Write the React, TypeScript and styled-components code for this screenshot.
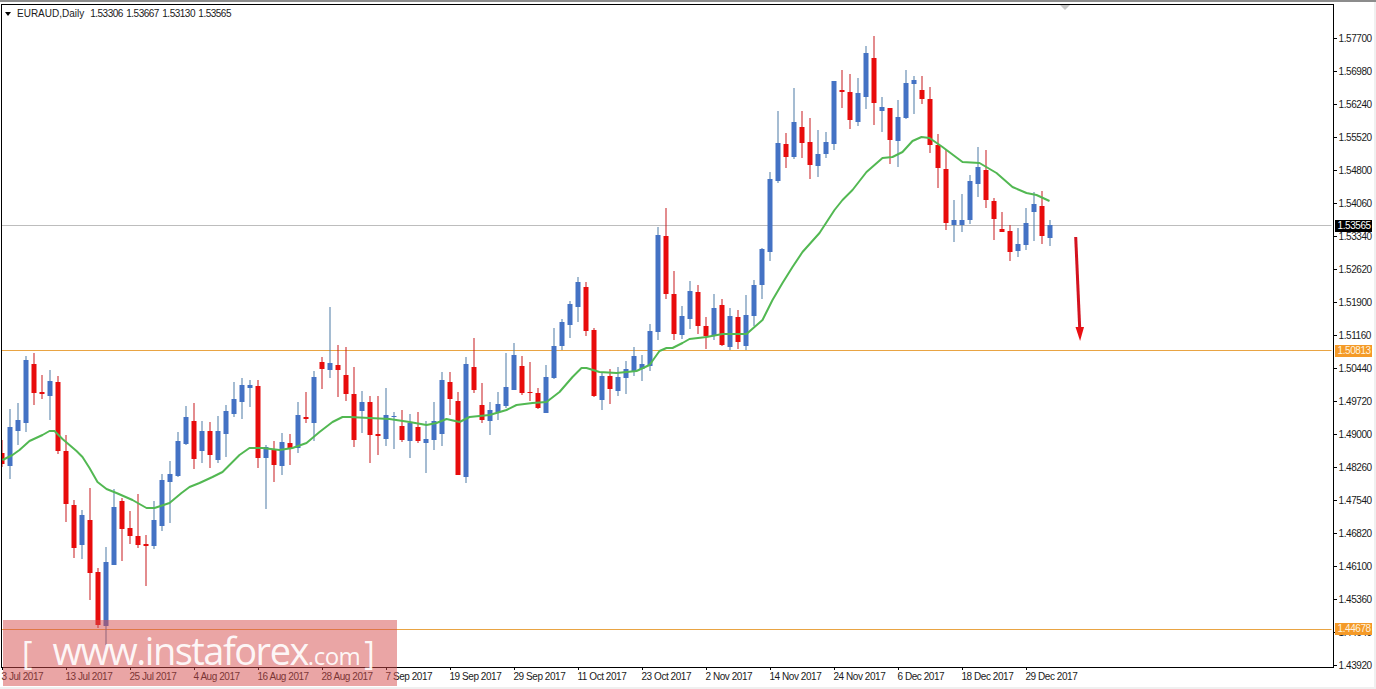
import React from "react";
import styled, { createGlobalStyle } from "styled-components";

const Global = createGlobalStyle`
  html, body { margin: 0; padding: 0; background: #f0f0f0; }
  #root { width: 1376px; height: 689px; overflow: hidden; }
`;

const FONT = `"Liberation Sans", Arial, sans-serif`;
const GREY = "#bdbdbd";
const ORANGE = "#e9a443";

const Page = styled.div`
  position: relative;
  width: 1376px;
  height: 689px;
  overflow: hidden;
  background: #f0f0f0;
  font-family: ${FONT};
  font-size: 10px;
  color: #1a1a1a;
`;
const TopEdge = styled.div`
  height: 2px;
  background: #8c8c8c;
`;
const Terminal = styled.div`
  width: 1374px;
  height: 685px;
  padding: 1.5px 0 0 1px;
  box-sizing: border-box;
  background: #fff;
  display: grid;
  grid-template-columns: 1333px 1fr;
  grid-template-rows: 664px 1fr;
`;
const Plot = styled.div`
  position: relative;
  box-sizing: border-box;
  border: 1.5px solid #000;
  overflow: hidden;
`;
const ChartSvg = styled.svg`
  display: block;
  width: 1330px;
  height: 661px;
  filter: blur(0.3px);
`;
const Legend = styled.div`
  position: absolute;
  left: 3px;
  top: 3.5px;
  display: flex;
  align-items: center;
  gap: 3.4px;
  line-height: 12px;
  white-space: nowrap;
`;
const LegendMark = styled.span`
  width: 0;
  height: 0;
  margin-right: 2.6px;
  border-left: 3px solid transparent;
  border-right: 3px solid transparent;
  border-top: 4px solid #000;
`;
const LegendName = styled.span`
  margin-right: 2.6px;
`;
const LegendValue = styled.span`
  letter-spacing: -0.5px;
`;
const ShiftMark = styled.div`
  position: absolute;
  left: 1058px;
  top: 0;
  width: 0;
  height: 0;
  border-left: 5px solid transparent;
  border-right: 5px solid transparent;
  border-top: 5px solid #c8c8c8;
`;
const PriceAxis = styled.div`
  display: flex;
  flex-direction: column;
  padding-top: 18px;
`;
const PriceTick = styled.div`
  position: relative;
  height: 33px;
  flex: none;
  padding-left: 4.5px;
  line-height: 33px;
  letter-spacing: -0.42px;
  white-space: nowrap;
  &::before {
    content: "";
    position: absolute;
    left: -1px;
    top: 16px;
    width: 4px;
    height: 1px;
    background: #000;
  }
`;
const TimeAxis = styled.div`
  grid-column: 1 / 3;
  display: flex;
  padding-left: 1px;
`;
const TimeTick = styled.div`
  position: relative;
  flex: none;
  width: 64px;
  padding-top: 3.5px;
  line-height: 12px;
  letter-spacing: -0.45px;
  text-indent: -0.5px;
  white-space: nowrap;
  &::before {
    content: "";
    position: absolute;
    left: 0;
    top: -1px;
    width: 1px;
    height: 3px;
    background: #000;
  }
`;
const PriceTag = styled.div<{ $top: number; $bg: string; $fg: string }>`
  position: absolute;
  left: 1334.5px;
  top: ${(p) => p.$top}px;
  width: 37px;
  height: 12px;
  padding-left: 3px;
  box-sizing: border-box;
  background: ${(p) => p.$bg};
  color: ${(p) => p.$fg};
  line-height: 12px;
  letter-spacing: -0.42px;
`;
const Watermark = styled.div`
  position: absolute;
  left: 3px;
  top: 620px;
  width: 394px;
  height: 66px;
  box-sizing: border-box;
  padding-left: 19px;
  background: rgba(214, 75, 75, 0.5);
  color: rgba(255, 255, 255, 0.92);
  font-family: "Open Sans", sans-serif;
  display: flex;
  align-items: baseline;
  line-height: 60px;
  white-space: nowrap;
`;
const Bracket = styled.span<{ $gap: number }>`
  font-size: 32px;
  font-weight: 400;
  margin-right: ${(p) => p.$gap}px;
  margin-left: ${(p) => (p.$gap ? 0 : 4)}px;
`;
const Site = styled.span`
  font-size: 38px;
  letter-spacing: -1.5px;
`;
const Tld = styled.span`
  font-size: 24px;
  letter-spacing: -0.5px;
`;

type Candle = [number, number, number, number, "b" | "r"];
const CANDLES: Candle[] = [
  [440,467,453,464,"r"],[409,479,427,466,"b"],[403,445,420,431,"b"],[356,432,360,423,"b"],
  [353,405,364,393,"r"],[375,399,392,394,"r"],[370,420,381,396,"b"],[376,454,382,451,"r"],
  [435,522,451,504,"r"],[500,558,505,548,"r"],[510,559,515,545,"b"],[488,600,520,573,"r"],
  [568,628,572,625,"r"],[547,645,562,626,"b"],[489,565,507,565,"b"],[498,561,501,529,"r"],
  [511,544,528,536,"r"],[494,548,536,545,"r"],[535,586,544,546,"r"],[501,549,520,546,"b"],
  [474,531,480,526,"b"],[461,523,474,482,"b"],[432,477,441,476,"b"],[406,445,417,444,"b"],
  [403,469,421,459,"r"],[421,463,431,451,"b"],[422,468,431,455,"r"],[416,463,431,460,"b"],
  [405,457,411,434,"b"],[382,417,399,414,"b"],[378,419,385,402,"b"],[380,407,385,388,"b"],
  [380,468,386,458,"r"],[445,509,447,458,"b"],[441,482,449,465,"r"],[433,475,442,466,"b"],
  [434,465,443,448,"r"],[402,453,415,448,"b"],[392,423,417,419,"r"],[371,441,377,423,"b"],
  [357,389,362,369,"r"],[307,378,363,370,"b"],[345,397,365,370,"r"],[347,401,375,394,"r"],
  [367,447,394,440,"r"],[391,433,402,411,"b"],[396,463,402,435,"r"],[396,455,434,436,"r"],
  [388,446,415,439,"b"],[412,449,416,417,"b"],[410,442,426,440,"r"],[414,458,423,441,"b"],
  [412,443,427,441,"r"],[421,473,439,443,"b"],[402,450,421,440,"b"],[372,446,380,434,"b"],
  [372,415,382,399,"r"],[392,475,401,475,"r"],[357,483,364,477,"b"],[338,393,367,390,"r"],
  [383,423,405,420,"r"],[402,435,410,421,"b"],[392,420,404,412,"b"],[353,408,387,406,"b"],
  [343,390,355,390,"b"],[356,395,366,393,"r"],[362,401,392,393,"r"],[388,409,393,408,"r"],
  [365,413,377,413,"b"],[328,379,346,378,"b"],[319,350,322,346,"b"],[301,338,304,325,"b"],
  [277,322,282,307,"b"],[282,336,287,331,"r"],[328,397,330,396,"r"],[372,410,376,400,"b"],
  [369,404,376,389,"r"],[367,396,377,391,"b"],[361,394,369,378,"b"],[347,376,356,371,"b"],
  [355,381,364,369,"b"],[324,371,331,366,"b"],[227,340,235,332,"b"],[208,299,236,294,"r"],
  [271,340,294,334,"r"],[306,339,316,335,"b"],[281,329,291,319,"b"],[285,334,292,326,"r"],
  [317,349,326,336,"r"],[294,340,308,336,"b"],[299,346,305,345,"r"],[308,350,316,347,"b"],
  [310,349,317,342,"r"],[295,350,315,346,"b"],[280,326,285,316,"b"],[248,299,249,285,"b"],
  [172,261,179,252,"b"],[111,183,143,181,"b"],[133,168,144,157,"r"],[88,159,122,157,"b"],
  [111,158,127,143,"r"],[118,179,142,165,"r"],[130,177,154,166,"b"],[132,158,142,154,"b"],
  [81,150,81,144,"b"],[70,108,90,92,"r"],[74,129,92,120,"r"],[78,126,93,122,"b"],
  [46,109,53,97,"b"],[36,125,58,103,"r"],[97,132,107,111,"b"],[108,164,108,140,"r"],
  [100,167,117,141,"b"],[70,119,83,118,"b"],[76,114,80,84,"b"],[76,104,90,99,"r"],
  [87,153,99,145,"r"],[134,188,145,168,"r"],[150,230,169,223,"r"],[200,242,220,225,"b"],
  [194,232,220,225,"b"],[175,224,181,220,"b"],[147,197,167,184,"b"],[150,208,170,200,"r"],
  [198,240,201,219,"r"],[212,232,229,232,"r"],[225,261,231,252,"r"],[228,257,244,251,"b"],
  [208,250,223,245,"b"],[192,241,204,212,"b"],[191,244,206,236,"r"],[220,246,225,238,"b"],
];

const MA = "3,460 13,455 20,450 30,441 43,435 50,431 55,431 63,439 77,451 83,457 90,468 98,482 107,489 117,493 133,500 147,508 155,508 170,503 182,493 190,487 200,483 213,477 223,472 230,465 240,455 250,448 263,448 280,450 293,448 307,443 320,432 333,422 343,417 350,417 370,418 390,419 410,422 427,425 437,423 447,419 460,422 470,417 490,415 507,410 517,405 533,403 547,402 560,392 573,377 582,368 587,368 600,372 617,373 637,371 650,365 660,351 667,348 673,348 683,343 690,339 707,337 723,334 747,334 763,320 773,300 783,283 793,267 803,252 820,233 835,210 843,200 853,190 867,172 883,158 893,157 903,152 913,141 922,137 930,138 943,147 963,162 980,163 997,173 1013,187 1027,193 1037,195 1050,201";

const PRICES = ["1.57700","1.56980","1.56240","1.55520","1.54800","1.54060","1.53340","1.52620","1.51900","1.51160","1.50440","1.49720","1.49000","1.48260","1.47540","1.46820","1.46100","1.45360","1.44640","1.43920"];
const DATES = ["3 Jul 2017","13 Jul 2017","25 Jul 2017","4 Aug 2017","16 Aug 2017","28 Aug 2017","7 Sep 2017","19 Sep 2017","29 Sep 2017","11 Oct 2017","23 Oct 2017","2 Nov 2017","14 Nov 2017","24 Nov 2017","6 Dec 2017","18 Dec 2017","29 Dec 2017"];
const OHLC = ["1.53306","1.53667","1.53130","1.53565"];

const WICK = { b: "#4c7aa6", r: "#c81a1f" };
const BODY = { b: "#4472c4", r: "#e80c0c" };

function Chart() {
  return (
    <ChartSvg viewBox="2.5 5 1330 661">
      <line x1="0" x2="1332" y1="225.5" y2="225.5" stroke={GREY} />
      <line x1="0" x2="1332" y1="350.5" y2="350.5" stroke={ORANGE} />
      <line x1="0" x2="1332" y1="629.5" y2="629.5" stroke={ORANGE} />
      {CANDLES.map(([wt, wb, bt, bb, c], i) => {
        const x = 2 + 8 * i;
        return (
          <g key={i}>
            <rect x={x} y={wt} width={1} height={wb - wt} fill={WICK[c]} />
            <rect x={x - 2} y={bt} width={5} height={Math.max(bb - bt, 1)} fill={BODY[c]} />
          </g>
        );
      })}
      <polyline points={MA} fill="none" stroke="#52b852" strokeWidth="2" strokeLinejoin="round" />
      <line x1="1076.2" y1="237" x2="1080.2" y2="328" stroke="#d3121f" strokeWidth="3" />
      <path d="M1076 327 L1084.5 327 L1080.6 341 Z" fill="#ea0f12" />
    </ChartSvg>
  );
}

export default function App() {
  return (
    <Page>
      <Global />
      <TopEdge />
      <Terminal>
        <Plot>
          <Chart />
          <Legend>
            <LegendMark />
            <LegendName>EURAUD,Daily</LegendName>
            {OHLC.map((v) => (
              <LegendValue key={v}>{v}</LegendValue>
            ))}
          </Legend>
          <ShiftMark />
        </Plot>
        <PriceAxis>
          {PRICES.map((p) => (
            <PriceTick key={p}>{p}</PriceTick>
          ))}
        </PriceAxis>
        <TimeAxis>
          {DATES.map((d) => (
            <TimeTick key={d}>{d}</TimeTick>
          ))}
        </TimeAxis>
      </Terminal>
      <PriceTag $top={220} $bg="#000" $fg="#fff">1.53565</PriceTag>
      <PriceTag $top={344.5} $bg="#f49a28" $fg="#fff3df">1.50813</PriceTag>
      <PriceTag $top={623} $bg="#f49a28" $fg="#fff3df">1.44678</PriceTag>
      <Watermark>
        <Bracket $gap={20}>[</Bracket>
        <Site>www.instaforex</Site>
        <Tld>.com</Tld>
        <Bracket $gap={0}>]</Bracket>
      </Watermark>
    </Page>
  );
}
